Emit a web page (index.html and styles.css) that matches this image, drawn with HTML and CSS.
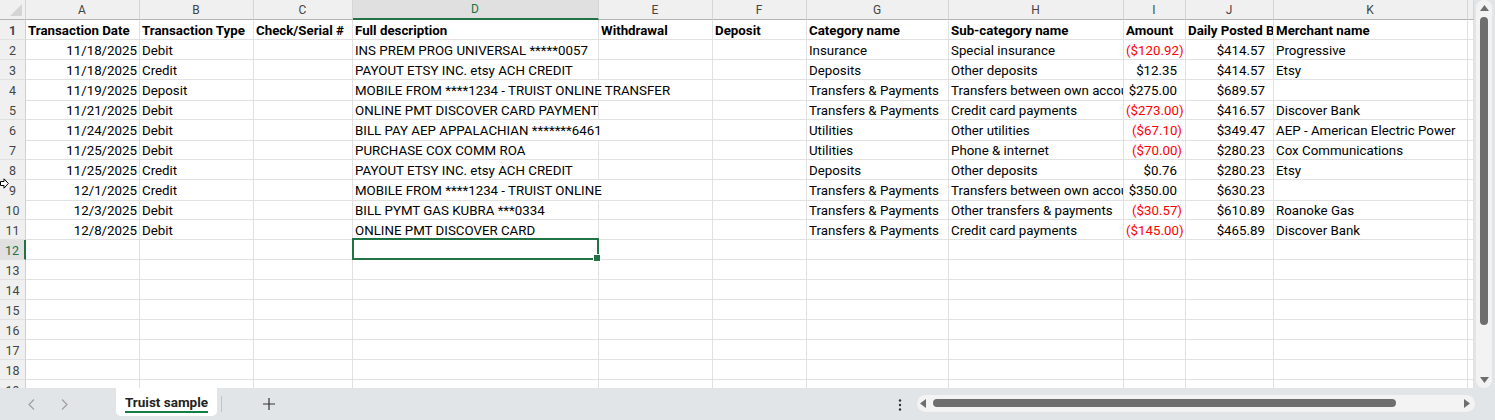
FILE: index.html
```html
<!DOCTYPE html>
<html lang="en">
<head>
    <meta charset="UTF-8">
    <title>Truist sample</title>
    <link rel="stylesheet" href="styles.css">
</head>
<body>
    <div class="workbook">
        <div class="sheet-area">
            <div class="grid">
                <div class="row col-heads">
                    <div class="c corner">
                        <svg width="12" height="12" viewBox="0 0 12 12"><polygon points="12,0 12,12 0,12" fill="#d4d4d4"/></svg>
                    </div>
                    <div class="c">A</div>
                    <div class="c">B</div>
                    <div class="c">C</div>
                    <div class="c active">D</div>
                    <div class="c">E</div>
                    <div class="c">F</div>
                    <div class="c">G</div>
                    <div class="c">H</div>
                    <div class="c">I</div>
                    <div class="c">J</div>
                    <div class="c">K</div>
                    <div class="c"></div>
                </div>

                <div class="row titles">
                    <div class="c rh">1</div>
                    <div class="c">Transaction Date</div>
                    <div class="c">Transaction Type</div>
                    <div class="c">Check/Serial #</div>
                    <div class="c">Full description</div>
                    <div class="c">Withdrawal</div>
                    <div class="c">Deposit</div>
                    <div class="c">Category name</div>
                    <div class="c">Sub-category name</div>
                    <div class="c">Amount</div>
                    <div class="c">Daily Posted Balance</div>
                    <div class="c">Merchant name</div>
                    <div class="c"></div>
                </div>

                <div class="row">
                    <div class="c rh">2</div>
                    <div class="c date">11/18/2025</div>
                    <div class="c">Debit</div>
                    <div class="c"></div>
                    <div class="c">INS PREM PROG UNIVERSAL *****0057</div>
                    <div class="c"></div>
                    <div class="c"></div>
                    <div class="c">Insurance</div>
                    <div class="c">Special insurance</div>
                    <div class="c num neg">($120.92)</div>
                    <div class="c num">$414.57</div>
                    <div class="c">Progressive</div>
                    <div class="c"></div>
                </div>

                <div class="row">
                    <div class="c rh">3</div>
                    <div class="c date">11/18/2025</div>
                    <div class="c">Credit</div>
                    <div class="c"></div>
                    <div class="c">PAYOUT ETSY INC. etsy ACH CREDIT</div>
                    <div class="c"></div>
                    <div class="c"></div>
                    <div class="c">Deposits</div>
                    <div class="c">Other deposits</div>
                    <div class="c num">$12.35</div>
                    <div class="c num">$414.57</div>
                    <div class="c">Etsy</div>
                    <div class="c"></div>
                </div>

                <div class="row">
                    <div class="c rh">4</div>
                    <div class="c date">11/19/2025</div>
                    <div class="c">Deposit</div>
                    <div class="c"></div>
                    <div class="c spill">MOBILE FROM ****1234 - TRUIST ONLINE TRANSFER</div>
                    <div class="c"></div>
                    <div class="c"></div>
                    <div class="c">Transfers &amp; Payments</div>
                    <div class="c">Transfers between own accounts</div>
                    <div class="c num">$275.00</div>
                    <div class="c num">$689.57</div>
                    <div class="c"></div>
                    <div class="c"></div>
                </div>

                <div class="row">
                    <div class="c rh">5</div>
                    <div class="c date">11/21/2025</div>
                    <div class="c">Debit</div>
                    <div class="c"></div>
                    <div class="c">ONLINE PMT DISCOVER CARD PAYMENT</div>
                    <div class="c"></div>
                    <div class="c"></div>
                    <div class="c">Transfers &amp; Payments</div>
                    <div class="c">Credit card payments</div>
                    <div class="c num neg">($273.00)</div>
                    <div class="c num">$416.57</div>
                    <div class="c">Discover Bank</div>
                    <div class="c"></div>
                </div>

                <div class="row">
                    <div class="c rh">6</div>
                    <div class="c date">11/24/2025</div>
                    <div class="c">Debit</div>
                    <div class="c"></div>
                    <div class="c spill">BILL PAY AEP APPALACHIAN *******6461</div>
                    <div class="c"></div>
                    <div class="c"></div>
                    <div class="c">Utilities</div>
                    <div class="c">Other utilities</div>
                    <div class="c num neg">($67.10)</div>
                    <div class="c num">$349.47</div>
                    <div class="c">AEP - American Electric Power</div>
                    <div class="c"></div>
                </div>

                <div class="row">
                    <div class="c rh">7</div>
                    <div class="c date">11/25/2025</div>
                    <div class="c">Debit</div>
                    <div class="c"></div>
                    <div class="c">PURCHASE COX COMM ROA</div>
                    <div class="c"></div>
                    <div class="c"></div>
                    <div class="c">Utilities</div>
                    <div class="c">Phone &amp; internet</div>
                    <div class="c num neg">($70.00)</div>
                    <div class="c num">$280.23</div>
                    <div class="c">Cox Communications</div>
                    <div class="c"></div>
                </div>

                <div class="row">
                    <div class="c rh">8</div>
                    <div class="c date">11/25/2025</div>
                    <div class="c">Credit</div>
                    <div class="c"></div>
                    <div class="c">PAYOUT ETSY INC. etsy ACH CREDIT</div>
                    <div class="c"></div>
                    <div class="c"></div>
                    <div class="c">Deposits</div>
                    <div class="c">Other deposits</div>
                    <div class="c num">$0.76</div>
                    <div class="c num">$280.23</div>
                    <div class="c">Etsy</div>
                    <div class="c"></div>
                </div>

                <div class="row">
                    <div class="c rh">9</div>
                    <div class="c date">12/1/2025</div>
                    <div class="c">Credit</div>
                    <div class="c"></div>
                    <div class="c spill">MOBILE FROM ****1234 - TRUIST ONLINE</div>
                    <div class="c"></div>
                    <div class="c"></div>
                    <div class="c">Transfers &amp; Payments</div>
                    <div class="c">Transfers between own accounts</div>
                    <div class="c num">$350.00</div>
                    <div class="c num">$630.23</div>
                    <div class="c"></div>
                    <div class="c"></div>
                </div>

                <div class="row">
                    <div class="c rh">10</div>
                    <div class="c date">12/3/2025</div>
                    <div class="c">Debit</div>
                    <div class="c"></div>
                    <div class="c">BILL PYMT GAS KUBRA ***0334</div>
                    <div class="c"></div>
                    <div class="c"></div>
                    <div class="c">Transfers &amp; Payments</div>
                    <div class="c">Other transfers &amp; payments</div>
                    <div class="c num neg">($30.57)</div>
                    <div class="c num">$610.89</div>
                    <div class="c">Roanoke Gas</div>
                    <div class="c"></div>
                </div>

                <div class="row">
                    <div class="c rh">11</div>
                    <div class="c date">12/8/2025</div>
                    <div class="c">Debit</div>
                    <div class="c"></div>
                    <div class="c">ONLINE PMT DISCOVER CARD</div>
                    <div class="c"></div>
                    <div class="c"></div>
                    <div class="c">Transfers &amp; Payments</div>
                    <div class="c">Credit card payments</div>
                    <div class="c num neg">($145.00)</div>
                    <div class="c num">$465.89</div>
                    <div class="c">Discover Bank</div>
                    <div class="c"></div>
                </div>

                <div class="row">
                    <div class="c rh active">12</div>
                    <div class="c"></div><div class="c"></div><div class="c"></div>
                    <div class="c selected"></div>
                    <div class="c"></div><div class="c"></div><div class="c"></div><div class="c"></div>
                    <div class="c"></div><div class="c"></div><div class="c"></div><div class="c"></div>
                </div>

                <div class="row">
                    <div class="c rh">13</div>
                    <div class="c"></div><div class="c"></div><div class="c"></div><div class="c"></div>
                    <div class="c"></div><div class="c"></div><div class="c"></div><div class="c"></div>
                    <div class="c"></div><div class="c"></div><div class="c"></div><div class="c"></div>
                </div>
                <div class="row">
                    <div class="c rh">14</div>
                    <div class="c"></div><div class="c"></div><div class="c"></div><div class="c"></div>
                    <div class="c"></div><div class="c"></div><div class="c"></div><div class="c"></div>
                    <div class="c"></div><div class="c"></div><div class="c"></div><div class="c"></div>
                </div>
                <div class="row">
                    <div class="c rh">15</div>
                    <div class="c"></div><div class="c"></div><div class="c"></div><div class="c"></div>
                    <div class="c"></div><div class="c"></div><div class="c"></div><div class="c"></div>
                    <div class="c"></div><div class="c"></div><div class="c"></div><div class="c"></div>
                </div>
                <div class="row">
                    <div class="c rh">16</div>
                    <div class="c"></div><div class="c"></div><div class="c"></div><div class="c"></div>
                    <div class="c"></div><div class="c"></div><div class="c"></div><div class="c"></div>
                    <div class="c"></div><div class="c"></div><div class="c"></div><div class="c"></div>
                </div>
                <div class="row">
                    <div class="c rh">17</div>
                    <div class="c"></div><div class="c"></div><div class="c"></div><div class="c"></div>
                    <div class="c"></div><div class="c"></div><div class="c"></div><div class="c"></div>
                    <div class="c"></div><div class="c"></div><div class="c"></div><div class="c"></div>
                </div>
                <div class="row">
                    <div class="c rh">18</div>
                    <div class="c"></div><div class="c"></div><div class="c"></div><div class="c"></div>
                    <div class="c"></div><div class="c"></div><div class="c"></div><div class="c"></div>
                    <div class="c"></div><div class="c"></div><div class="c"></div><div class="c"></div>
                </div>
                <div class="row">
                    <div class="c rh">19</div>
                    <div class="c"></div><div class="c"></div><div class="c"></div><div class="c"></div>
                    <div class="c"></div><div class="c"></div><div class="c"></div><div class="c"></div>
                    <div class="c"></div><div class="c"></div><div class="c"></div><div class="c"></div>
                </div>

                <!-- mouse pointer left over the row headers -->
                <svg class="pointer" width="9" height="11" viewBox="0 0 9 11">
                    <path d="M0.5 3.5 H4 V0.8 L8.3 5.5 L4 10.2 V7.5 H0.5 Z" fill="#fff" stroke="#000" stroke-width="1"/>
                </svg>
            </div>

            <div class="vscroll">
                <div class="vtrack">
                    <svg width="9" height="6" viewBox="0 0 9 6"><polygon points="4.5,0 9,6 0,6" fill="#6e6e6e"/></svg>
                    <div class="vthumb"></div>
                    <svg class="down" width="9" height="6" viewBox="0 0 9 6"><polygon points="0,0 9,0 4.5,6" fill="#6e6e6e"/></svg>
                </div>
            </div>
        </div>

        <div class="tabbar">
            <div class="nav">
                <svg width="7" height="11" viewBox="0 0 7 11"><polyline points="6,0.5 1,5.5 6,10.5" fill="none" stroke="#a0a0a0" stroke-width="1.2"/></svg>
                <svg width="7" height="11" viewBox="0 0 7 11"><polyline points="1,0.5 6,5.5 1,10.5" fill="none" stroke="#a0a0a0" stroke-width="1.2"/></svg>
            </div>
            <div class="tab"><span class="tab-name">Truist sample</span></div>
            <div class="tab-sep"></div>
            <div class="add-sheet">
                <svg width="12" height="12" viewBox="0 0 12 12"><path d="M6 0 V12 M0 6 H12" stroke="#333" stroke-width="1.2"/></svg>
            </div>
            <div class="spacer"></div>
            <div class="more">
                <svg width="4" height="12" viewBox="0 0 4 12"><circle cx="2" cy="1.5" r="1.2" fill="#333"/><circle cx="2" cy="6" r="1.2" fill="#333"/><circle cx="2" cy="10.5" r="1.2" fill="#333"/></svg>
            </div>
            <div class="hscroll">
                <svg width="6" height="9" viewBox="0 0 6 9"><polygon points="0,4.5 6,0 6,9" fill="#6e6e6e"/></svg>
                <div class="hthumb"></div>
                <div class="spacer"></div>
                <svg width="6" height="9" viewBox="0 0 6 9"><polygon points="0,0 6,4.5 0,9" fill="#6e6e6e"/></svg>
            </div>
        </div>
    </div>
</body>
</html>
```
FILE: styles.css
```css
:root {
    --grid-line: #e1e1e1;
    --head-bg: #f0f0f0;
    --head-text: #444;
    --excel-green: #217346;
    --chrome-bg: #e1e5e8;
    --track-bg: #f3f3f3;
    --thumb: #6e6e6e;
}

* {
    margin: 0;
    padding: 0;
    box-sizing: border-box;
}

body {
    font-family: Roboto, "Liberation Sans", sans-serif;
    background: var(--chrome-bg);
    color: #000;
    overflow: hidden;
}

.workbook {
    width: 1495px;
    height: 420px;
    display: flex;
    flex-direction: column;
}

.sheet-area {
    display: flex;
    height: 388px;
}

.grid {
    position: relative;
    width: 1474px;
    height: 388px;
    overflow: hidden;
    background: #fff;
}

.row {
    display: grid;
    grid-template-columns: 26px 114px 114px 99px 246px 114px 94px 142px 175px 62px 88px 194px 5px;
    height: 20px;
}

.c {
    position: relative;
    border-right: 1px solid var(--grid-line);
    border-bottom: 1px solid var(--grid-line);
    padding: 1px 3px 0 2px;
    font-size: 13.3px;
    line-height: 19px;
    white-space: nowrap;
    overflow: hidden;
}

.spill {
    overflow: visible;
    border-right-color: transparent;
}

.titles .c {
    font-weight: 700;
}

.date {
    text-align: right;
    padding-right: 2px;
}

.num {
    text-align: right;
    padding-right: 8px;
}

.neg {
    color: #ff0000;
    padding-right: 3px;
}

/* headers */
.col-heads .c {
    background: var(--head-bg);
    color: var(--head-text);
    text-align: center;
    font-size: 12px;
    border-right-color: #d6d6d6;
    border-bottom-color: #b4b4b4;
}

.col-heads .corner {
    display: flex;
    align-items: flex-end;
    justify-content: flex-end;
    padding: 0 3px 3px 0;
}

.col-heads .active {
    background: #e0e0e0;
    color: var(--excel-green);
    border-bottom: 2px solid var(--excel-green);
    line-height: 17px;
}

.c.rh {
    background: var(--head-bg);
    color: var(--head-text);
    text-align: center;
    font-size: 12.5px;
    padding: 1px 0 0;
    border-right-color: #d0d0d0;
}

.c.rh.active {
    background: #e0e0e0;
    color: var(--excel-green);
    border-right: 2px solid var(--excel-green);
}

/* active cell */
.selected {
    overflow: visible;
}

.selected::after {
    content: "";
    position: absolute;
    left: -1px;
    top: -2px;
    right: -1px;
    bottom: -1px;
    border: 2px solid var(--excel-green);
}

.selected::before {
    content: "";
    position: absolute;
    right: -3px;
    bottom: -3px;
    width: 6px;
    height: 6px;
    background: var(--excel-green);
    border: 1px solid #fff;
    z-index: 1;
}

.pointer {
    position: absolute;
    left: 0;
    top: 178px;
}

/* vertical scrollbar */
.vscroll {
    width: 21px;
    padding: 0 3px 0 2px;
}

.vtrack {
    height: 388px;
    background: var(--track-bg);
    border-radius: 8px;
    display: flex;
    flex-direction: column;
    align-items: center;
    padding: 5px 0 5px;
}

.vthumb {
    width: 8px;
    height: 308px;
    margin-top: 6px;
    background: var(--thumb);
    border-radius: 4px;
}

.vtrack .down {
    margin-top: auto;
}

/* sheet tabs */
.tabbar {
    flex: 1;
    display: flex;
    align-items: center;
}

.nav {
    width: 116px;
    display: flex;
    align-items: center;
    gap: 26px;
    padding-left: 28px;
}

.nav svg {
    display: block;
}

.tab {
    align-self: flex-start;
    width: 101px;
    height: 28px;
    background: #fff;
    border-radius: 0 0 5px 5px;
    display: flex;
    justify-content: center;
    padding-top: 6px;
}

.tab-name {
    font-size: 13.5px;
    font-weight: 700;
    color: #242424;
    line-height: 17px;
    height: 19px;
    border-bottom: 2px solid #137e43;
}

.tab-sep {
    width: 1px;
    height: 16px;
    margin-left: 4px;
    background: #c4c4c4;
}

.add-sheet {
    margin-left: 41px;
    display: flex;
}

.spacer {
    flex: 1;
}

.more {
    display: flex;
    margin-right: 15px;
    margin-top: 2px;
}

.hscroll {
    width: 558px;
    height: 17px;
    margin-right: 20px;
    margin-top: -2px;
    background: var(--track-bg);
    border-radius: 9px;
    display: flex;
    align-items: center;
    padding: 0 5px 0 3px;
}

.hthumb {
    width: 463px;
    height: 8px;
    margin-left: 7px;
    background: var(--thumb);
    border-radius: 4px;
}
```
